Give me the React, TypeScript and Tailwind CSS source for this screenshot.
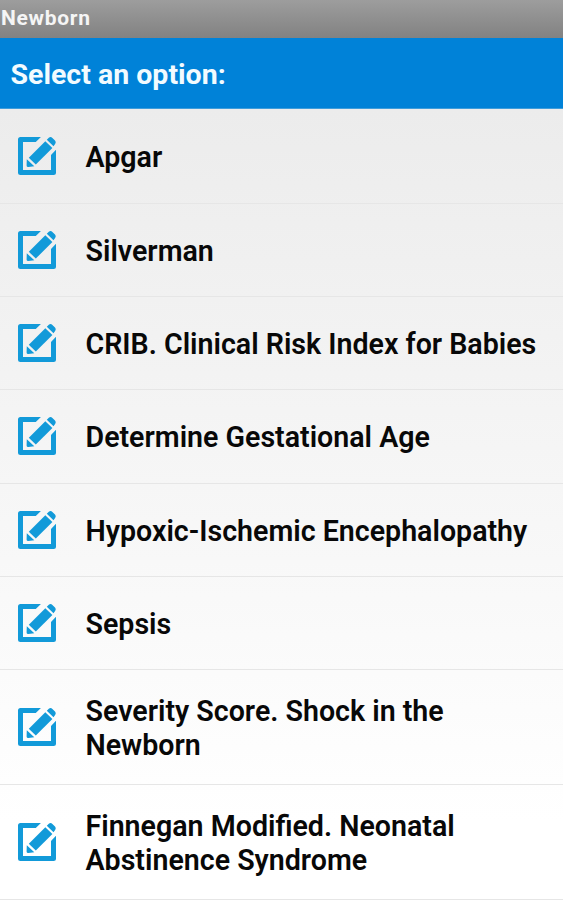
const options = [
  { label: "Apgar", height: "h-[94.5px]" },
  { label: "Silverman", height: "h-[93px]" },
  { label: "CRIB. Clinical Risk Index for Babies", height: "h-[93.5px]" },
  { label: "Determine Gestational Age", height: "h-[93.5px]" },
  { label: "Hypoxic-Ischemic Encephalopathy", height: "h-[93.5px]" },
  { label: "Sepsis", height: "h-[93px]" },
  { label: "Severity Score. Shock in the Newborn", height: "h-[115px]" },
  { label: "Finnegan Modified. Neonatal Abstinence Syndrome", height: "h-[114.5px]" },
];

function EditIcon() {
  return (
    <svg className="h-[38px] w-[38px] shrink-0" viewBox="0 0 38 38" fill="#129ad9" aria-hidden="true">
      <path d="M2.5 0H22.9L17.8 5H5V33H33V18L38 12.8V35.5Q38 38 35.5 38H2.5Q0 38 0 35.5V2.5Q0 0 2.5 0Z" />
      <path d="M10.8 20.7L27.3 4.2L34.4 11L17.8 27.6Z" />
      <path d="M8.8 22.3L16.3 29.3L10.4 30Q8.6 30.1 8.6 28.4Z" />
      <path d="M28.8 2.7L30.8.8Q32.6-.7 34.4.9L37 3.5Q38.4 5.2 37.1 6.9L35.5 9.2Z" />
    </svg>
  );
}

export default function App() {
  return (
    <main className="flex h-[900px] w-full flex-col overflow-hidden bg-white font-[Roboto,sans-serif] font-semibold">
      <header className="flex h-[38px] shrink-0 items-center bg-linear-to-b from-[#9d9d9d] to-[#828282] pl-px text-[21px] leading-none font-bold tracking-[0.7px] text-[#f5f5f5]">
        <span className="-mt-0.5">Newborn</span>
      </header>
      <h1 className="flex h-[71px] shrink-0 items-center border-b border-[#3f9ddb] bg-[#0082d8] pt-[5px] pl-[10.5px] text-[28.5px] font-bold text-[#f2fbff]">
        Select an option:
      </h1>
      <ul className="flex flex-1 flex-col bg-linear-to-b from-[#ececec] to-white to-90%">
        {options.map(({ label, height }) => (
          <li key={label} className={`flex shrink-0 items-center gap-[30px] border-b border-[#e6e6e6] pr-5 pl-[17.5px] ${height}`}>
            <EditIcon />
            <span className="pt-[3.5px] text-[28.6px] leading-[33.5px] text-[#080808]">{label}</span>
          </li>
        ))}
      </ul>
    </main>
  );
}
